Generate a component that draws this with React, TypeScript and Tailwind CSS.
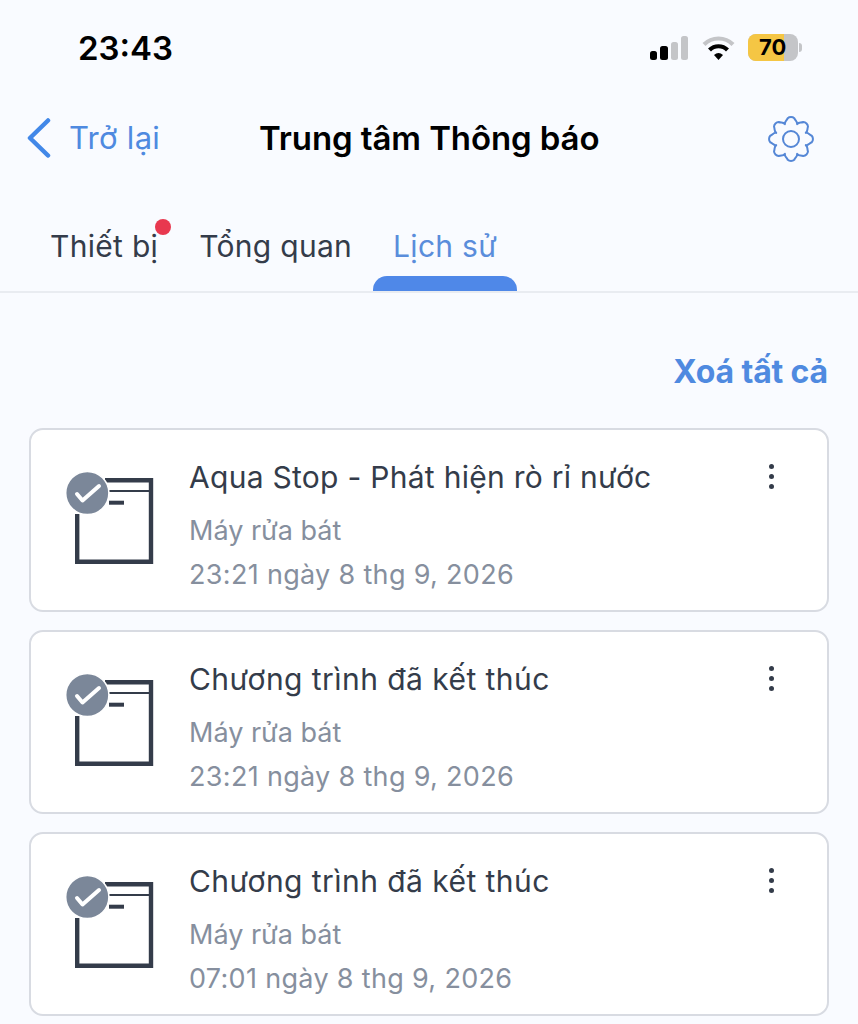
import React from 'react';

const font = { fontFamily: 'Inter, "Noto Sans", sans-serif' };

// eight rounded teeth round the centre, valley to valley
const gearPath = () => {
  const pt = (r: number, deg: number) => {
    const a = (deg * Math.PI) / 180;
    return `${(23 + r * Math.sin(a)).toFixed(2)} ${(23 - r * Math.cos(a)).toFixed(2)}`;
  };
  let d = `M${pt(16, -22.5)}`;
  for (let i = 0; i < 8; i++) {
    const t = i * 45;
    d += `C${pt(19, t - 20)} ${pt(18.5, t - 14)} ${pt(21, t - 9)}`;
    d += `C${pt(22.4, t - 4)} ${pt(22.4, t + 4)} ${pt(21, t + 9)}`;
    d += `C${pt(18.5, t + 14)} ${pt(19, t + 20)} ${pt(16, t + 22.5)}`;
  }
  return d + 'Z';
};

const ApplianceIcon = () => (
  <svg width="90" height="96" viewBox="0 0 90 96" fill="none" className="shrink-0">
    <path d="M12.2 44V91.8H86V10.2H40" stroke="#343c4a" strokeWidth="4.4" />
    <path d="M44 21H86" stroke="#343c4a" strokeWidth="2" />
    <path d="M44 32.7H59" stroke="#343c4a" strokeWidth="4" />
    <circle cx="22.3" cy="23" r="21.6" fill="#7b8799" stroke="#ffffff" strokeWidth="1.5" />
    <path d="M12 24L17.5 30.5L34 16" stroke="#ffffff" strokeWidth="4" strokeLinecap="round" strokeLinejoin="round" />
  </svg>
);

const Card = ({ title, time, wide }: { title: string; time: string; wide?: boolean }) => (
  <div className="h-[184px] rounded-[14px] border-2 border-[#d8dbe2] bg-white flex pl-[34px] pr-[53px] pt-[27px]">
    <div className="w-[124px] shrink-0 pt-[13px]">
      <ApplianceIcon />
    </div>
    <div className="flex-1">
      <div className={`text-[30px] leading-[40px] text-[#343c4a] whitespace-nowrap ${wide ? 'tracking-[0.45px]' : 'tracking-[0.28px]'}`}>{title}</div>
      <div className="text-[27px] leading-[34px] text-[#868f9e] mt-[17px]">Máy rửa bát</div>
      <div className="text-[27px] leading-[34px] text-[#868f9e] mt-[10px] tracking-[0.32px]">{time}</div>
    </div>
    <div className="flex flex-col gap-[5px] pt-[7px]">
      <span className="w-[5px] h-[5px] rounded-full bg-[#343c4a]" />
      <span className="w-[5px] h-[5px] rounded-full bg-[#343c4a]" />
      <span className="w-[5px] h-[5px] rounded-full bg-[#343c4a]" />
    </div>
  </div>
);

export default function App() {
  return (
    <div className="w-[858px] h-[1024px] overflow-hidden bg-[#f9fbff]" style={font}>
      {/* status bar */}
      <div className="h-[96px] flex items-start justify-between pl-[78px] pr-[56px] pt-[29px]">
        <span className="text-[33px] leading-[39px] font-semibold text-black">23:43</span>
        <div className="flex items-center gap-[13px] pt-[5px]">
          <svg width="40" height="26" viewBox="0 0 40 26">
            <rect x="1" y="16" width="7" height="9" rx="2.5" fill="#000" />
            <rect x="11" y="11" width="8" height="14" rx="2.5" fill="#000" />
            <rect x="22" y="7" width="7" height="18" rx="2.5" fill="#c4c5c8" />
            <rect x="32" y="1" width="7" height="24" rx="2.5" fill="#c4c5c8" />
          </svg>
          <svg width="33" height="26" viewBox="0 0 33 26" fill="none">
            <path d="M2 9.5C10 1.5 23 1.5 31 9.5" stroke="#c4c5c8" strokeWidth="4.2" />
            <path d="M7.5 15C12.5 10 20.5 10 25.5 15" stroke="#000" strokeWidth="4.2" />
            <path d="M12 20C15 17.2 18 17.2 21 20L16.5 25Z" fill="#000" />
          </svg>
          <div className="flex items-center">
            <div className="relative w-[50px] h-[27px] rounded-[8px] bg-[#c4c5c8] overflow-hidden">
              <div className="w-[36px] h-full bg-[#f5c644]" />
              <span className="absolute inset-0 pl-[11px] text-[22px] leading-[27px] font-bold text-black">70</span>
            </div>
            <div className="w-[3px] h-[9px] ml-[1px] rounded-r-full bg-[#c4c5c8]" />
          </div>
        </div>
      </div>

      {/* nav */}
      <div className="h-[84px] flex items-center pl-[26px] pr-[44px]">
        <div className="flex items-center gap-[18px] w-[233px]">
          <svg width="25" height="40" viewBox="0 0 25 40" fill="none">
            <path d="M22 2.5L4 20L22 37.5" stroke="#4288e8" strokeWidth="4.5" strokeLinecap="round" strokeLinejoin="round" />
          </svg>
          <span className="text-[31px] leading-[40px] text-[#4f8ae0] tracking-[0.3px]">Trở lại</span>
        </div>
        <span className="text-[33px] leading-[40px] font-semibold text-black tracking-[-0.1px]">Trung tâm Thông báo</span>
        <svg width="46" height="46" viewBox="0 0 46 46" fill="none" stroke="#5587d6" strokeWidth="2" strokeLinejoin="round" className="ml-auto mt-[2px]">
          <circle cx="23" cy="23" r="8" />
          <path d={gearPath()} />
        </svg>
      </div>

      {/* tabs */}
      <div className="h-[113px] border-b-2 border-[#e9ecf1] flex pl-[50px]">
        <div className="relative mt-[46px] text-[30px] leading-[40px] text-[#343c4a] tracking-[0.3px]">
          Thiết bị
          <span className="absolute -top-[7px] -right-[13px] w-[16px] h-[16px] rounded-full bg-[#e8384f]" />
        </div>
        <div className="ml-[41px] mt-[46px] text-[30px] leading-[40px] text-[#343c4a] tracking-[0.3px]">Tổng quan</div>
        <div className="ml-[21px] w-[144px] flex flex-col items-center justify-between pt-[46px]">
          <span className="text-[30px] leading-[40px] text-[#5a8ddb] tracking-[0.3px] whitespace-nowrap">Lịch sử</span>
          <span className="w-full h-[15px] rounded-t-[14px] bg-[#4f88e8]" />
        </div>
      </div>

      {/* clear all */}
      <div className="flex justify-end pr-[30px] pt-[60px] h-[135px]">
        <span className="text-[32px] leading-[38px] font-bold text-[#4f8ae0] tracking-[-0.15px]">Xoá tất cả</span>
      </div>

      {/* list */}
      <div className="mx-[29px] flex flex-col gap-[18px]">
        <Card title="Aqua Stop - Phát hiện rò rỉ nước" time="23:21 ngày 8 thg 9, 2026" />
        <Card title="Chương trình đã kết thúc" time="23:21 ngày 8 thg 9, 2026" wide />
        <Card title="Chương trình đã kết thúc" time="07:01 ngày 8 thg 9, 2026" wide />
      </div>
    </div>
  );
}
